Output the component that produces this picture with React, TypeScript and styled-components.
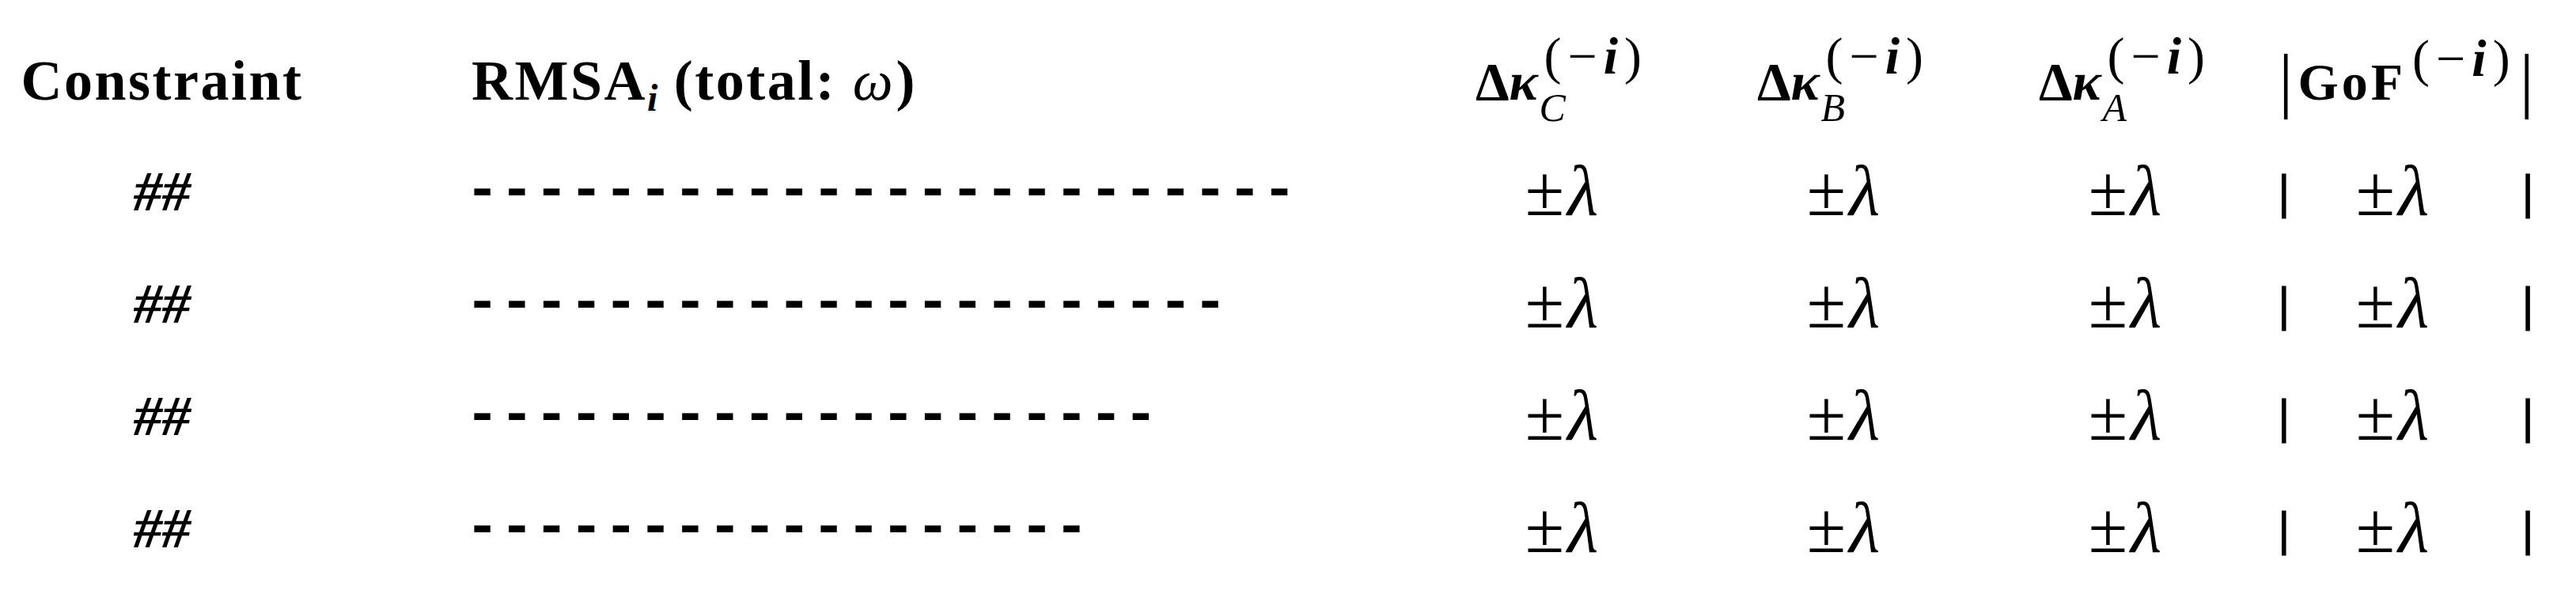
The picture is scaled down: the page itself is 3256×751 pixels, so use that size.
import styled, { createGlobalStyle } from "styled-components";

const GlobalStyle = createGlobalStyle`
  html, body {
    margin: 0;
    padding: 0;
    background: #ffffff;
  }

  body {
    color: #000000;
    font-family: "Liberation Serif", "Times New Roman", serif;
  }
`;

type Align = "left" | "center";

const rows = [
    { dashes: 24 },
    { dashes: 22 },
    { dashes: 20 },
    { dashes: 18 },
];

const deltaColumns = ["C", "B", "A"];

export default function App() {
    return (
        <>
            <GlobalStyle />
            <Table>
                <HeadCell>Constraint</HeadCell>
                <HeadCell $align="left" $indent={211}>
                    RMSA<HeadSub>i</HeadSub> (total: <Omega>ω</Omega>)
                </HeadCell>

                {deltaColumns.map((letter) =>
                    <HeadCell key={letter}>
                        <MathExpr>
                            <Delta>Δ</Delta>
                            <Kappa>κ</Kappa>
                            <Scripts>
                                <Sup>(−<SupVar>i</SupVar>)</Sup>
                                <Sub>{letter}</Sub>
                            </Scripts>
                        </MathExpr>
                    </HeadCell>
                )}

                <HeadCell $align="left" $indent={48}>
                    <Fence>|</Fence>
                    <GoF>GoF</GoF>
                    <Scripts $raise={30}>
                        <Sup>(−<SupVar>i</SupVar>)</Sup>
                    </Scripts>
                    <Fence $gap={4}>|</Fence>
                </HeadCell>

                {rows.map((row, index) =>
                    <Row key={index}>
                        <HashCell>##</HashCell>
                        <DashCell>{"-".repeat(row.dashes)}</DashCell>
                        <ValueCell>±<Lambda>λ</Lambda></ValueCell>
                        <ValueCell>±<Lambda>λ</Lambda></ValueCell>
                        <ValueCell>±<Lambda>λ</Lambda></ValueCell>
                        <GoFCell>
                            <Bar>|</Bar>
                            <Value>±<Lambda>λ</Lambda></Value>
                            <Bar>|</Bar>
                        </GoFCell>
                    </Row>
                )}
            </Table>
        </>
    );
}

const Table = styled.div`
    width: 3256px;
    height: 751px;
    box-sizing: border-box;
    padding-left: 25px;

    display: grid;
    grid-template-columns: 360px 1443px 292px 420px 292px 424px;
    grid-template-rows: 171px repeat(4, 142px);

    overflow: hidden;
`;

const Row = styled.div`
    display: contents;
`;

const HeadCell = styled.div<{ $align?: Align; $indent?: number }>`
    height: 171px;
    box-sizing: border-box;
    padding-top: 27px;
    padding-left: ${(p) => p.$indent ?? 0}px;

    font-size: 72px;
    font-weight: 700;
    line-height: 150px;
    letter-spacing: 2.5px;
    text-align: ${(p) => p.$align ?? "center"};
    white-space: nowrap;
`;

const HeadSub = styled.span`
    font-size: 48px;
    font-style: italic;
    line-height: 0;
    vertical-align: -14px;
    letter-spacing: 0;
`;

const Omega = styled.span`
    font-style: italic;
    font-weight: 400;
    letter-spacing: 4px;
`;

const MathExpr = styled.span`
    font-size: 68px;
    letter-spacing: 0;
    white-space: nowrap;
`;

const Delta = styled.span`
    font-weight: 700;
`;

const Kappa = styled.span`
    font-style: italic;
    font-weight: 700;
`;

const Scripts = styled.span<{ $raise?: number }>`
    display: inline-flex;
    flex-direction: column;
    align-items: flex-start;
    vertical-align: ${(p) => p.$raise ?? 33}px;
    margin-left: 2px;
`;

const Sup = styled.span`
    font-size: 66px;
    font-weight: 400;
    line-height: 60px;
    letter-spacing: 8px;
    margin-left: 6px;
`;

const SupVar = styled.span`
    font-style: italic;
    font-weight: 700;
`;

const Sub = styled.span`
    font-size: 50px;
    font-style: italic;
    font-weight: 400;
    line-height: 45px;
    margin-top: 13px;
`;

const GoF = styled.span`
    font-size: 66px;
    letter-spacing: 4px;
    margin-left: 6px;
`;

const Fence = styled.span<{ $gap?: number }>`
    font-size: 92px;
    font-weight: 400;
    line-height: 0;
    letter-spacing: 0;
    vertical-align: -6px;
    margin-left: ${(p) => p.$gap ?? 0}px;
`;

const Cell = styled.div`
    height: 142px;
    line-height: 142px;
    white-space: nowrap;
`;

const HashCell = styled(Cell)`
    font-size: 72px;
    font-weight: 700;
    font-style: italic;
    text-align: center;
`;

const DashCell = styled(Cell)`
    padding-left: 203px;

    font-family: "Liberation Mono", "Courier New", monospace;
    font-size: 72px;
    font-weight: 700;
    letter-spacing: 0.6px;
`;

const ValueCell = styled(Cell)`
    font-size: 90px;
    text-align: center;
`;

const Lambda = styled.span`
    font-style: italic;
    margin-left: 4px;
`;

const GoFCell = styled.div`
    width: 322px;
    height: 142px;
    margin-left: 48px;

    display: flex;
    justify-content: space-between;

    line-height: 142px;
    white-space: nowrap;
`;

const Bar = styled.span`
    font-size: 62px;
    font-weight: 700;
    -webkit-text-stroke: 1.2px #000000;
`;

const Value = styled.span`
    font-size: 90px;
    margin-right: 34px;
`;
